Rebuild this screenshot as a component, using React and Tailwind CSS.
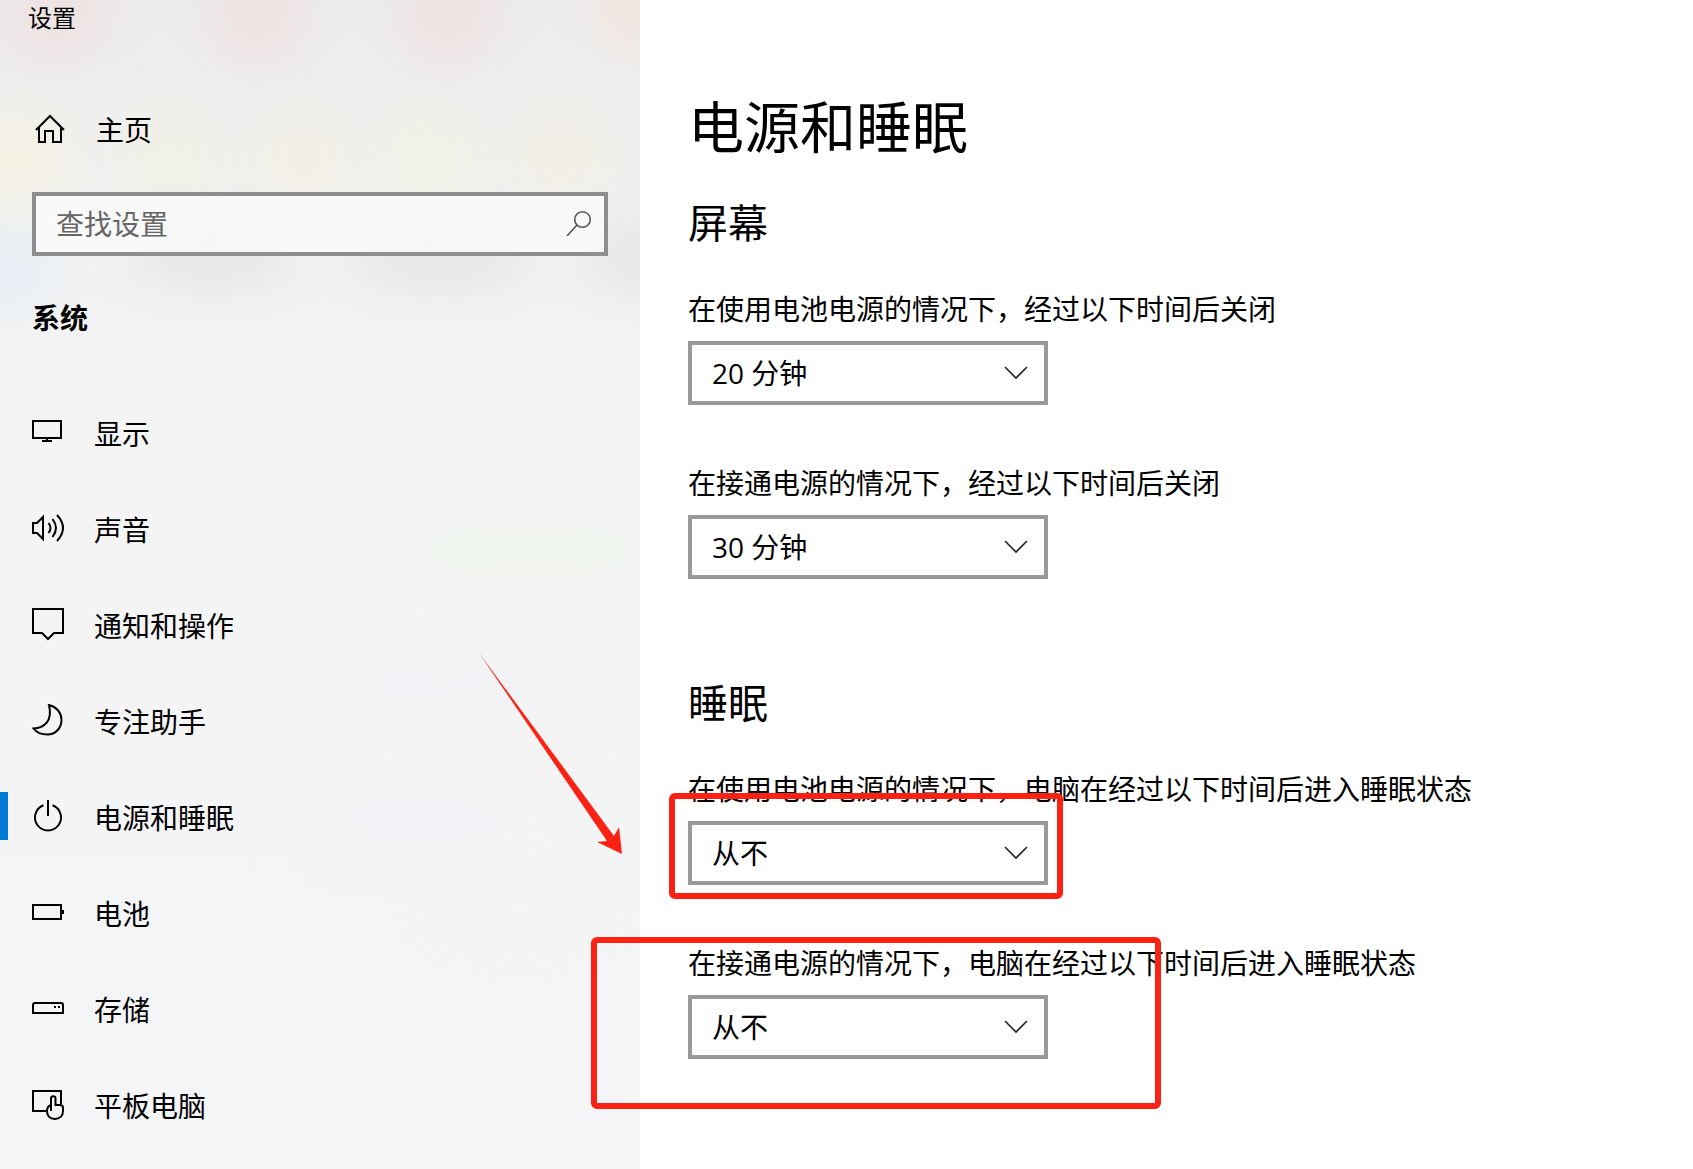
import React, { useState } from "react";

const HomeIcon = () => (
  <>
    <path d="M2 16 16 2l14 14" />
    <path d="M5 13v15h6V17h8v11h8V13" />
  </>
);

const navItems = [
  {
    id: "display",
    label: "显示",
    icon: (
      <>
        <path d="M1 5h28v17H1z" />
        <path d="M15 22v3M10 25h10" />
      </>
    ),
  },
  {
    id: "sound",
    label: "声音",
    icon: (
      <>
        <path d="M1 11h4l6-6v22l-6-6H1z" />
        <path d="M16.500 11q4 5 0 10M20.500 7q7 9 0 18M25 3q12 13 0 26" />
      </>
    ),
  },
  {
    id: "notifications",
    label: "通知和操作",
    icon: <path d="M1 1h30v24h-9l-6 6-6-6H1z" />,
  },
  {
    id: "focus",
    label: "专注助手",
    icon: <path d="M17 1c8 2 12.500 8 12.500 15 0 8-6 14.500-14 14.500-6 0-11-2-14-6C12 24 21 17 17 1z" />,
  },
  {
    id: "power",
    label: "电源和睡眠",
    icon: (
      <>
        <path d="M16 0v16" />
        <path d="M11.500 5.300a13 13 0 1 0 9 0" />
      </>
    ),
  },
  {
    id: "battery",
    label: "电池",
    icon: (
      <>
        <path d="M1 9h28v14H1z" />
        <path d="M31 14v4" />
      </>
    ),
  },
  {
    id: "storage",
    label: "存储",
    icon: (
      <>
        <path d="M1 21v-8a2 2 0 0 1 2-2h26a2 2 0 0 1 2 2v8z" />
        <path d="M22 15h2M26 15h2" />
      </>
    ),
  },
  {
    id: "tablet",
    label: "平板电脑",
    icon: (
      <>
        <path d="M14 23H1V3h28v13" />
        <path d="M19 23V10.500a2.200 2.200 0 0 1 4.500 0V17h4.500a3 3 0 0 1 3 3v3c0 5-3.500 8-8.200 8S15 28 15 23c0-3 .8-5 4-6" />
      </>
    ),
  },
];

// Soft colour spots that show through the translucent sidebar
const spots = [
  "left-0 -top-12 h-28 w-28 bg-[#efdcdc]",
  "left-52 -top-12 h-28 w-24 bg-[#f0dada]",
  "left-[400px] -top-12 h-28 w-24 bg-[#f0dada]",
  "left-[600px] -top-8 h-20 w-20 bg-[#f8ddd0]",
  "-left-10 top-28 h-24 w-28 bg-[#f7f3dc]",
  "left-[130px] top-[112px] h-24 w-20 bg-[#f4f2dc]",
  "left-[264px] top-[112px] h-24 w-20 bg-[#f5f1dc]",
  "left-[390px] top-[112px] h-24 w-20 bg-[#f5f3dc]",
  "left-[520px] top-[108px] h-24 w-20 bg-[#f4f0dc]",
  "-left-10 top-56 h-24 w-24 bg-[#e4eef8]",
  "left-[140px] top-[230px] h-14 w-36 bg-[#dedede]",
  "left-[360px] top-[230px] h-14 w-40 bg-[#dedede]",
  "left-[590px] top-[226px] h-16 w-24 bg-[#dedede]",
  "left-[400px] top-[510px] h-20 w-64 bg-[#eef5ec]",
  "left-[440px] top-[590px] h-16 w-44 bg-[#f6f1f0]",
  "left-[340px] top-[650px] h-16 w-52 bg-[#eff2f6]",
  "left-[430px] top-[730px] h-12 w-36 bg-[#f7f0ef]",
  "left-[330px] top-[790px] h-14 w-48 bg-[#eef2f6]",
  "left-[440px] top-[880px] h-14 w-40 bg-[#f7f1f0]",
];

const Icon = ({ children }) => (
  <svg viewBox="0 0 32 32" className="h-8 w-8 shrink-0 overflow-visible" fill="none" stroke="currentColor" strokeWidth="2" aria-hidden="true">
    {children}
  </svg>
);

const TimeSelect = ({ id, label, value, onChange, children }) => (
  <div className="flex flex-col items-start gap-3">
    <label htmlFor={id} className="text-[28px] leading-10">{label}</label>
    <div className="relative w-[360px]">
      <select
        id={id}
        value={value}
        onChange={(e) => onChange(e.target.value)}
        className="h-16 w-full appearance-none border-4 border-[#999] bg-white pl-5 pr-14 text-[28px] text-black outline-none"
      >
        {["20 分钟", "30 分钟", "从不"].map((option) => (
          <option key={option} value={option}>{option}</option>
        ))}
      </select>
      <svg viewBox="0 0 24 14" className="pointer-events-none absolute right-5 top-[25px] h-[14px] w-6" fill="none" stroke="#222" strokeWidth="1.600" aria-hidden="true">
        <path d="m1 1 11 11L23 1" />
      </svg>
      {children}
    </div>
  </div>
);

const App = () => {
  const [active, setActive] = useState("power");
  const [query, setQuery] = useState("");
  const [times, setTimes] = useState({
    screenBattery: "20 分钟",
    screenPlugged: "30 分钟",
    sleepBattery: "从不",
    sleepPlugged: "从不",
  });

  const setTime = (key) => (value) => setTimes((prev) => ({ ...prev, [key]: value }));

  return (
    <div className="flex min-h-screen overflow-hidden bg-white font-['Open_Sans','Noto_Sans_CJK_SC',sans-serif] text-black">
      <aside className="relative isolate w-[640px] shrink-0 bg-linear-to-b from-[#ececec] via-[#f4f4f4] via-35% to-[#f4f5f7]">
        <div className="absolute inset-0 -z-10 overflow-hidden">
          {spots.map((spot) => (
            <div key={spot} className={`absolute rounded-full opacity-60 blur-xl ${spot}`} />
          ))}
        </div>

        <div className="pl-7 text-2xl leading-9">设置</div>

        <a href="#home" className="mt-[62px] flex h-16 items-center gap-[30px] pl-[34px] text-[28px]">
          <Icon><HomeIcon /></Icon>
          主页
        </a>

        <div className="relative mx-8 mt-[30px]">
          <input
            type="text"
            aria-label="查找设置"
            placeholder="查找设置"
            value={query}
            onChange={(e) => setQuery(e.target.value)}
            className="h-16 w-full border-4 border-[#8e8e8e] bg-white/60 pl-5 pr-16 text-[28px] outline-none placeholder:text-[#666]"
          />
          <svg viewBox="0 0 26 26" className="pointer-events-none absolute right-4 top-[18px] h-[26px] w-[26px]" fill="none" stroke="#555" strokeWidth="1.600" aria-hidden="true">
            <circle cx="16.500" cy="9.500" r="7.800" />
            <path d="M11 15 1 26" />
          </svg>
        </div>

        <h2 className="mt-[42px] pl-8 text-[28px] font-bold leading-10">系统</h2>

        <nav className="mt-[46px]">
          {navItems.map((item) => (
            <a
              key={item.id}
              href={`#${item.id}`}
              onClick={() => setActive(item.id)}
              className="relative flex h-24 items-center gap-[30px] pl-8 text-[28px]"
            >
              {active === item.id && <span className="absolute left-0 top-6 h-12 w-2 bg-[#0078d7]" />}
              <Icon>{item.icon}</Icon>
              <span className="pt-1">{item.label}</span>
            </a>
          ))}
        </nav>
      </aside>

      <main className="min-w-0 flex-1 whitespace-nowrap pb-12 pl-12 pt-[94px]">
        <h1 className="text-[56px] leading-[64px]">电源和睡眠</h1>

        <section className="mt-[37px]">
          <h2 className="text-[40px] leading-[56px]">屏幕</h2>
          <div className="mt-[38px] flex flex-col gap-[58px]">
            <TimeSelect
              id="screen-battery"
              label="在使用电池电源的情况下，经过以下时间后关闭"
              value={times.screenBattery}
              onChange={setTime("screenBattery")}
            />
            <TimeSelect
              id="screen-plugged"
              label="在接通电源的情况下，经过以下时间后关闭"
              value={times.screenPlugged}
              onChange={setTime("screenPlugged")}
            />
          </div>
        </section>

        <section className="mt-24">
          <h2 className="text-[40px] leading-[56px]">睡眠</h2>
          <div className="mt-[38px] flex flex-col gap-[58px]">
            <TimeSelect
              id="sleep-battery"
              label="在使用电池电源的情况下，电脑在经过以下时间后进入睡眠状态"
              value={times.sleepBattery}
              onChange={setTime("sleepBattery")}
            >
              <div className="pointer-events-none absolute -bottom-[14px] -left-[19px] -right-[15px] -top-7 rounded-md border-6 border-[#fb2213]" />
              <svg viewBox="0 0 144 202" className="pointer-events-none absolute -left-[209px] -top-[168px] h-[202px] w-36" fill="#fb2213" aria-hidden="true">
                <path d="M0 0 135 183l5-9 3 27-25-12 10-1z" />
              </svg>
            </TimeSelect>
            <TimeSelect
              id="sleep-plugged"
              label="在接通电源的情况下，电脑在经过以下时间后进入睡眠状态"
              value={times.sleepPlugged}
              onChange={setTime("sleepPlugged")}
            >
              <div className="pointer-events-none absolute -bottom-[50px] -left-[97px] -right-[113px] -top-[58px] rounded-md border-6 border-[#fb2213]" />
            </TimeSelect>
          </div>
        </section>
      </main>
    </div>
  );
};

export default App;
